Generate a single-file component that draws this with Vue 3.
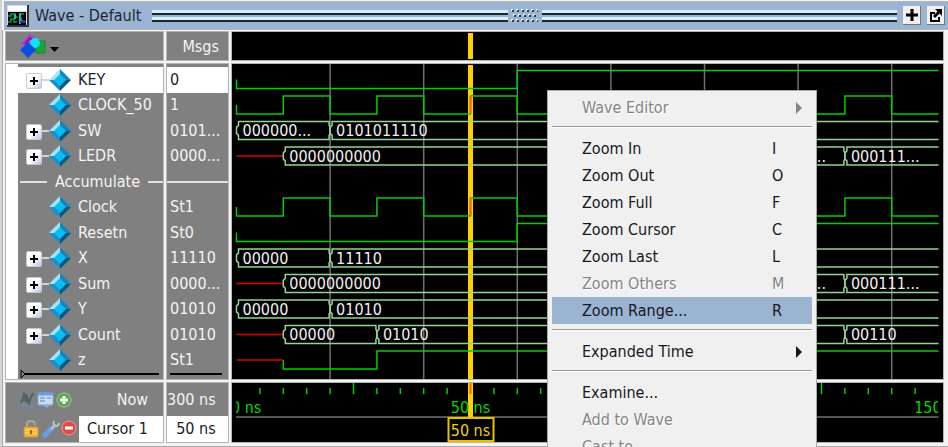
<script setup>
const PX_PER_NS = 4.68
const ORIGIN = 4.5
const ROW = 25.5
const END = 150

const signals = [
  { name: 'KEY', value: '0', bus: true, selected: true, bits: [[0, 0], [60, 1]] },
  { name: 'CLOCK_50', value: '1', clock: true },
  { name: 'SW', value: '0101...', bus: true, words: [[0, 20, '000000...'], [20, 150, '0101011110']] },
  { name: 'LEDR', value: '0000...', bus: true, unknown: 10, words: [[10, 110, '0000000000'], [110, 130, '000011...'], [130, 150, '000111...']] },
  { name: 'Accumulate', divider: true },
  { name: 'Clock', value: 'St1', clock: true },
  { name: 'Resetn', value: 'St0', bits: [[0, 0], [60, 1]] },
  { name: 'X', value: '11110', bus: true, words: [[0, 20, '00000'], [20, 150, '11110']] },
  { name: 'Sum', value: '0000...', bus: true, unknown: 10, words: [[10, 110, '0000000000'], [110, 130, '000011...'], [130, 150, '000111...']] },
  { name: 'Y', value: '01010', bus: true, words: [[0, 20, '00000'], [20, 150, '01010']] },
  { name: 'Count', value: '01010', bus: true, unknown: 10, words: [[10, 30, '00000'], [30, 130, '01010'], [130, 150, '00110']] },
  { name: 'z', value: 'St1', unknown: 10, bits: [[10, 0], [30, 1]] },
]

const clockBits = Array.from({ length: 15 }, (_, i) => [i * 10, i % 2])
const x = (t) => ORIGIN + t * PX_PER_NS
const mid = (i) => 15.4 + i * ROW

function bitPath(sig, i) {
  const bits = sig.clock ? clockBits : sig.bits
  const y = (v) => mid(i) + (v ? -9 : 9)
  let d = `M${x(bits[0][0])} ${mid(i)}`
  for (const [t, v] of bits) d += `H${x(t)}V${y(v)}`
  return d + `H${x(END)}`
}

function wordPath([from, to], i) {
  const top = mid(i) - 9
  const bottom = mid(i) + 9
  const l = x(from)
  const r = x(to)
  const left = `H${l + 2}V${top + 4}L${l} ${top + 6}V${bottom - 6}L${l + 2} ${bottom - 4}V${bottom}`
  if (to === END) return `M${r} ${top}${left}H${r}`
  return `M${r - 1} ${top}${left}H${r - 1}V${bottom - 4}L${r} ${bottom - 6}V${top + 6}L${r - 1} ${top + 4}Z`
}

const traces = signals.flatMap((s, i) => (s.clock || s.bits ? [bitPath(s, i)] : []))
const words = signals.flatMap((s, i) =>
  (s.words || []).map((w) => ({ d: wordPath(w, i), text: w[2], x: x(w[0]) + 6, y: mid(i) + 6 })))
const unknowns = signals.flatMap((s, i) => (s.unknown ? [`M${x(0)} ${mid(i)}H${x(s.unknown)}`] : []))
const gridLines = [20, 40, 60, 80, 100, 120, 140]
const ticks = Array.from({ length: 29 }, (_, i) => (i + 1) * 5)
const cursorX = x(50)

const menu = [
  { label: 'Wave Editor', sub: true, disabled: true },
  null,
  { label: 'Zoom In', key: 'I' },
  { label: 'Zoom Out', key: 'O' },
  { label: 'Zoom Full', key: 'F' },
  { label: 'Zoom Cursor', key: 'C' },
  { label: 'Zoom Last', key: 'L' },
  { label: 'Zoom Others', key: 'M', disabled: true },
  { label: 'Zoom Range...', key: 'R', active: true },
  null,
  { label: 'Expanded Time', sub: true },
  null,
  { label: 'Examine...' },
  { label: 'Add to Wave', disabled: true },
  { label: 'Cast to', disabled: true },
]
</script>

<template>
  <main class="window">
    <header class="titlebar">
      <svg class="app-icon" width="22" height="22" viewBox="0 0 22 22">
        <rect width="22" height="22" fill="#333" />
        <rect width="20" height="20" fill="#d8d8d8" />
        <rect x="1" y="1" width="19" height="5" fill="#fff" />
        <rect x="1" y="7" width="18" height="13" fill="#000" />
        <path d="M1 11H4V9H8V12H11M13 9H17M1 17H4V14H7V17H10M14 12V16H18" fill="none" stroke="#0a9a38" stroke-width="1.5" />
        <path d="M8 9V14M13 8V19" stroke="#23b7c8" stroke-width="2" />
        <path d="M13 17H19" stroke="#4a20d0" stroke-width="2" />
      </svg>
      <h1>Wave - Default</h1>
      <span class="groove"></span>
      <svg class="grip" width="28" height="14">
        <defs>
          <pattern id="grip-dots" width="5" height="10" patternUnits="userSpaceOnUse">
            <rect x="0" y="0" width="2" height="2" fill="#e8f6ff" /><rect x="1" y="1" width="2" height="2" fill="#333d48" />
            <rect x="2" y="5" width="2" height="2" fill="#e8f6ff" /><rect x="3" y="6" width="2" height="2" fill="#333d48" />
          </pattern>
        </defs>
        <rect width="27" height="13" fill="url(#grip-dots)" />
      </svg>
      <span class="groove"></span>
      <button class="tool" aria-label="Maximize">
        <svg width="14" height="14"><path d="M7 1V13M1 7H13" stroke="#000" stroke-width="3" /></svg>
      </button>
      <button class="tool" aria-label="Undock">
        <svg width="14" height="14" fill="none" stroke="#000">
          <path d="M6 5H2V13H10V9" stroke-width="2" />
          <path d="M5 9L11 3" stroke-width="3" /><path d="M6 1H13V8Z" fill="#000" stroke="none" />
        </svg>
      </button>
    </header>

    <section class="workspace">
      <div class="cell head-names">
        <button class="filter" aria-label="Signal filter">
          <svg width="42" height="26">
            <path d="M1 11L10 1L18 8L10 14Z" fill="#c030d8" />
            <path d="M5 11L10 5L14 8" fill="none" stroke="#6a2080" stroke-width="1.5" />
            <path d="M14 8H25V20H16Z" fill="#18a838" stroke="#20803a" />
            <circle cx="15" cy="10" r="5" fill="#10e0f8" />
            <path d="M0 17L8 9L16 17L8 25Z" fill="#0850e0" />
            <path d="M30 14H39L34.5 19Z" fill="#000" />
          </svg>
        </button>
      </div>
      <div class="cell head-msgs">Msgs</div>
      <div class="cell dark">
        <svg class="wave"><path :d="`M${cursorX} 1V27`" class="cursor-line" /></svg>
      </div>

      <div class="cell names">
        <div v-for="s in signals" :key="s.name" class="row" :class="{ selected: s.selected, divider: s.divider }">
          <template v-if="!s.divider">
            <span class="lead">
              <button v-if="s.bus" class="expand" :aria-label="'Expand ' + s.name">
                <svg width="10" height="10"><path d="M5 1V9M1 5H9" stroke="#000" stroke-width="2" /></svg>
              </button>
            </span>
            <span class="link" :class="{ on: s.bus }"></span>
            <svg class="gem" width="22" height="22" viewBox="0 0 22 22">
              <path d="M11 0L0 11L11 11Z" fill="#a5e4f8" />
              <path d="M11 0L22 11H11Z" fill="#1683bd" />
              <path d="M0 11L11 22V11Z" fill="#1590d0" />
              <path d="M22 11L11 22V11Z" fill="#07587f" />
              <path d="M11 5L17 11L11 17L5 11Z" fill="#0bbcf2" />
            </svg>
          </template>
          <span class="label">{{ s.name }}</span>
        </div>
        <svg class="end-mark" width="100%" height="10">
          <path d="M4 5H139" stroke="#000" stroke-width="2" /><path d="M1 1V9L5 5Z" fill="#808080" stroke="#000" />
        </svg>
      </div>

      <div class="cell msgs">
        <div v-for="s in signals" :key="s.name" class="row" :class="{ selected: s.selected, divider: s.divider }">{{ s.value }}</div>
        <svg class="end-mark" width="100%" height="10"><path d="M1 5H53" stroke="#000" stroke-width="2" /></svg>
      </div>

      <div class="cell dark">
        <svg class="wave">
          <path v-for="t in gridLines" :key="t" :d="`M${x(t)} 0V400`" class="grid-line" />
          <path :d="`M${cursorX} 1V400`" class="cursor-line" />
          <path v-for="(d, i) in traces" :key="'t' + i" :d="d" class="trace" />
          <path v-for="(d, i) in unknowns" :key="'u' + i" :d="d" class="unknown" />
          <g v-for="(w, i) in words" :key="'w' + i">
            <path :d="w.d" class="bus" />
            <text :x="w.x" :y="w.y" class="word">{{ w.text }}</text>
          </g>
          <path
            v-for="i in [1, 5]" :key="'c' + i" class="edge"
            :d="`M${cursorX} ${mid(i) + 9}V${mid(i) - 9}`"
          />
        </svg>
      </div>

      <div class="cell foot-names">
        <div class="foot-row">
          <svg class="icons" width="52" height="18">
            <path d="M1 12L4 3L7 12M3 9H6M6 3L9 12L11 6L14 2" fill="none" stroke="#555f68" stroke-width="2" />
            <path d="M1 15H14M4 12L1 15L4 17M11 12L14 15L11 17" fill="none" stroke="#5c94d0" />
            <rect x="18" y="2" width="15" height="12" rx="1" fill="#c9dcf4" stroke="#7ca4da" />
            <path d="M18 3H33" stroke="#6c9be0" stroke-width="3" />
            <path d="M20 7H25M20 10H25M27 7H31" stroke="#5580b8" /><path d="M22 14H30L27 17Z" fill="#7eacdf" />
            <circle cx="44" cy="9" r="7" fill="#55aa50" stroke="#8dcc88" /><path d="M44 5V13M40 9H48" stroke="#fff" stroke-width="3" />
          </svg>
          <span class="foot-label">Now</span>
        </div>
        <div class="foot-row">
          <svg class="icons lower" width="55" height="20">
            <path d="M4 9V5Q4 2 8 2Q12 2 12 6" fill="none" stroke="#a9a9a0" stroke-width="2" />
            <rect x="1" y="8" width="14" height="10" rx="1" fill="#f2b638" stroke="#d6982c" />
            <path d="M2 11H14M2 14H14" stroke="#ffdf7d" /><rect x="7" y="11" width="2" height="4" fill="#9b6818" />
            <path d="M22 16L29 9" stroke="#6e9ee8" stroke-width="5" stroke-linecap="round" />
            <path d="M28 10L33 6M31 2Q29 7 34 7Q36 6 36 4" fill="none" stroke="#bcc6d0" stroke-width="2" />
            <circle cx="46" cy="9" r="7" fill="#e24a46" stroke="#f29a94" /><path d="M42 9H50" stroke="#fff" stroke-width="3" />
          </svg>
          <span class="foot-label boxed">Cursor 1</span>
        </div>
      </div>
      <div class="cell foot-msgs">
        <div class="foot-row"><span class="foot-label">300 ns</span></div>
        <div class="foot-row"><span class="foot-label boxed">50 ns</span></div>
      </div>
      <div class="cell dark">
        <svg class="wave">
          <defs><clipPath id="ruler-clip"><rect x="4" y="0" width="702" height="60" /></clipPath></defs>
          <path :d="`M4 34H${x(END)}`" class="grid-line" />
          <path :d="`M${cursorX} 0V34`" class="cursor-line" />
          <path v-for="t in ticks" :key="t" :d="`M${x(t)} ${t % 25 ? 5 : 0}V11`" :class="t === 50 ? 'edge' : 'trace'" />
          <g clip-path="url(#ruler-clip)" class="time">
            <text x="-1" y="30">0 ns</text>
            <text :x="cursorX" y="30" text-anchor="middle">50 ns</text>
            <text :x="x(150)" y="30" text-anchor="middle">150 ns</text>
          </g>
          <rect :x="cursorX - 22" y="35" width="45" height="23" class="cursor-box" />
          <text :x="cursorX" y="53" text-anchor="middle" class="cursor-text">50 ns</text>
        </svg>
      </div>
    </section>

    <div class="menu" role="menu">
      <template v-for="(m, i) in menu" :key="i">
        <hr v-if="!m" />
        <button v-else role="menuitem" :disabled="m.disabled" :class="{ active: m.active }">
          <span>{{ m.label }}</span>
          <kbd v-if="m.key">{{ m.key }}</kbd>
          <svg v-if="m.sub" width="16" height="12"><path d="M0 0L6 6L0 12Z" fill="currentColor" /></svg>
        </button>
      </template>
    </div>
  </main>
</template>

<style>
body {
  margin: 0;
}
</style>

<style scoped>
.window {
  position: relative;
  height: 100vh;
  overflow: hidden;
  box-sizing: border-box;
  padding-top: 2px;
  border-left: 2px solid #d4d4d4;
  background: #f4f4f4;
  font-family: "DejaVu Sans Condensed", "DejaVu Sans", sans-serif;
  font-size: 16px;
  line-height: 20px;
  color: #f4f4f4;
}

button {
  font: inherit;
  padding: 0;
  border: 0;
  background: none;
}

svg {
  display: block;
  flex: none;
}

.titlebar {
  display: flex;
  align-items: center;
  height: 27px;
  margin-left: 2px;
  padding: 0 3px;
  background: #9ab4d2;
  border-bottom: 1px solid #b4b4b8;
  box-shadow: 0 -1px #b4b4b8;
  color: #1c2733;
}

h1 {
  margin: 0 11px 0 6px;
  font-size: 16px;
  font-weight: 400;
  white-space: nowrap;
}

.groove {
  flex: 1;
  height: 12px;
  background: linear-gradient(#d4f0fc 0 3px, #1c242c 3px 5px, #9ab4d2 5px 7px, #d4f0fc 7px 10px, #1c242c 10px 12px);
}

.grip {
  margin: 0 3px;
}

.tool {
  display: grid;
  place-items: center;
  width: 18px;
  height: 19px;
  margin-left: 6px;
  background: #f0f0f0;
  border-right: 1px solid #777;
  border-bottom: 1px solid #777;
}

.workspace {
  display: grid;
  grid-template-columns: 157px 61px 1fr;
  grid-template-rows: 28px auto 59px;
  gap: 4px;
  padding: 2px 5px 4px 3px;
  border-left: 1px solid #aaa;
  border-bottom: 1px solid #aaa;
}

.cell {
  min-width: 0;
  overflow: hidden;
  background: #808080;
  box-shadow: 0 0 0 1px #b4b4b4;
}

.dark {
  display: grid;
  background: #000;
}

.wave {
  width: 100%;
  height: 100%;
}

.head-names {
  display: flex;
  align-items: center;
  padding-left: 14px;
}

.head-msgs {
  display: flex;
  align-items: center;
  justify-content: flex-end;
  padding: 2px 9px 0 0;
}

.names,
.msgs {
  display: grid;
  grid-template-rows: repeat(12, 1fr) 6px;
  height: 312px;
  padding-top: 3px;
}

.names {
  border-left: 12px solid #fff;
}

.row {
  display: flex;
  align-items: center;
  white-space: nowrap;
}

.msgs .row {
  padding-left: 3px;
}

.row.selected {
  color: #20242c;
  background: #fff;
}

.lead {
  width: 24px;
  padding: 2px 0 0 8px;
  box-sizing: border-box;
}

.expand {
  display: grid;
  place-items: center;
  width: 16px;
  height: 16px;
  border: 1px solid #c5cad8;
  border-radius: 2px;
  background: linear-gradient(135deg, #fff 50%, #b9c4e0);
}

.link {
  width: 7px;
  height: 2px;
}

.link.on {
  background: #d0d4d8;
}

.label {
  margin-left: 7px;
}

.names .divider {
  gap: 8px;
  padding-left: 2px;
}

.names .divider .label {
  margin: 0;
}

.names .divider::before {
  content: "";
  width: 27px;
  height: 2px;
  background: #e0e0e0;
}

.names .divider::after,
.msgs .divider::before {
  content: "";
  flex: 1;
  height: 2px;
  background: #e0e0e0;
}

.msgs .divider {
  padding: 0;
}

.end-mark {
  align-self: end;
  padding-left: 2px;
  box-sizing: border-box;
}

.cursor-line {
  stroke: #ffd000;
  stroke-width: 5;
}

.grid-line {
  stroke: #707070;
  stroke-width: 1.5;
}

.trace,
.bus,
.unknown,
.edge {
  fill: none;
  stroke-width: 1.5;
}

.trace {
  stroke: #00d000;
}

.bus {
  stroke: #94d494;
}

.unknown {
  stroke: #e00000;
}

.edge {
  stroke: #ff6000;
  stroke-width: 2;
}

.word {
  fill: #f0f0f0;
}

.time {
  fill: #00d800;
}

.cursor-box {
  fill: #000;
  stroke: #e8c000;
  stroke-width: 2;
}

.cursor-text {
  fill: #f0d000;
}

.foot-names,
.foot-msgs {
  display: grid;
  grid-template-rows: 33px 26px;
}

.foot-row {
  display: flex;
  justify-content: flex-end;
}

.foot-names .foot-row {
  justify-content: space-between;
}

.icons {
  align-self: center;
  margin-left: 14px;
}

.icons.lower {
  margin-left: 17px;
}

.foot-label {
  display: flex;
  align-items: center;
  justify-content: flex-end;
  padding-right: 15px;
  white-space: nowrap;
}

.foot-msgs .foot-label {
  flex: 1;
  min-width: 0;
}

.boxed {
  color: #1c1c24;
  background: #fff;
}

.foot-names .boxed {
  padding-left: 8px;
}

.menu {
  position: absolute;
  left: 545px;
  top: 90px;
  width: 260px;
  padding: 3px 4px;
  border: 1px solid #a8a8a8;
  background: #f0f0f0;
  color: #16181e;
}

.menu button {
  display: flex;
  align-items: center;
  width: 100%;
  height: 27px;
  padding-left: 30px;
  color: inherit;
  text-align: left;
}

.menu button span {
  flex: 1;
}

.menu button:disabled {
  color: #858585;
  text-shadow: 1px 1px #fff;
}

.menu button.active {
  background: #9ab4d2;
}

kbd {
  width: 40px;
  font: inherit;
}

hr {
  height: 1px;
  margin: 5px 0 7px;
  border: 0;
  background: #9a9a9a;
  border-bottom: 1px solid #fff;
}
</style>
